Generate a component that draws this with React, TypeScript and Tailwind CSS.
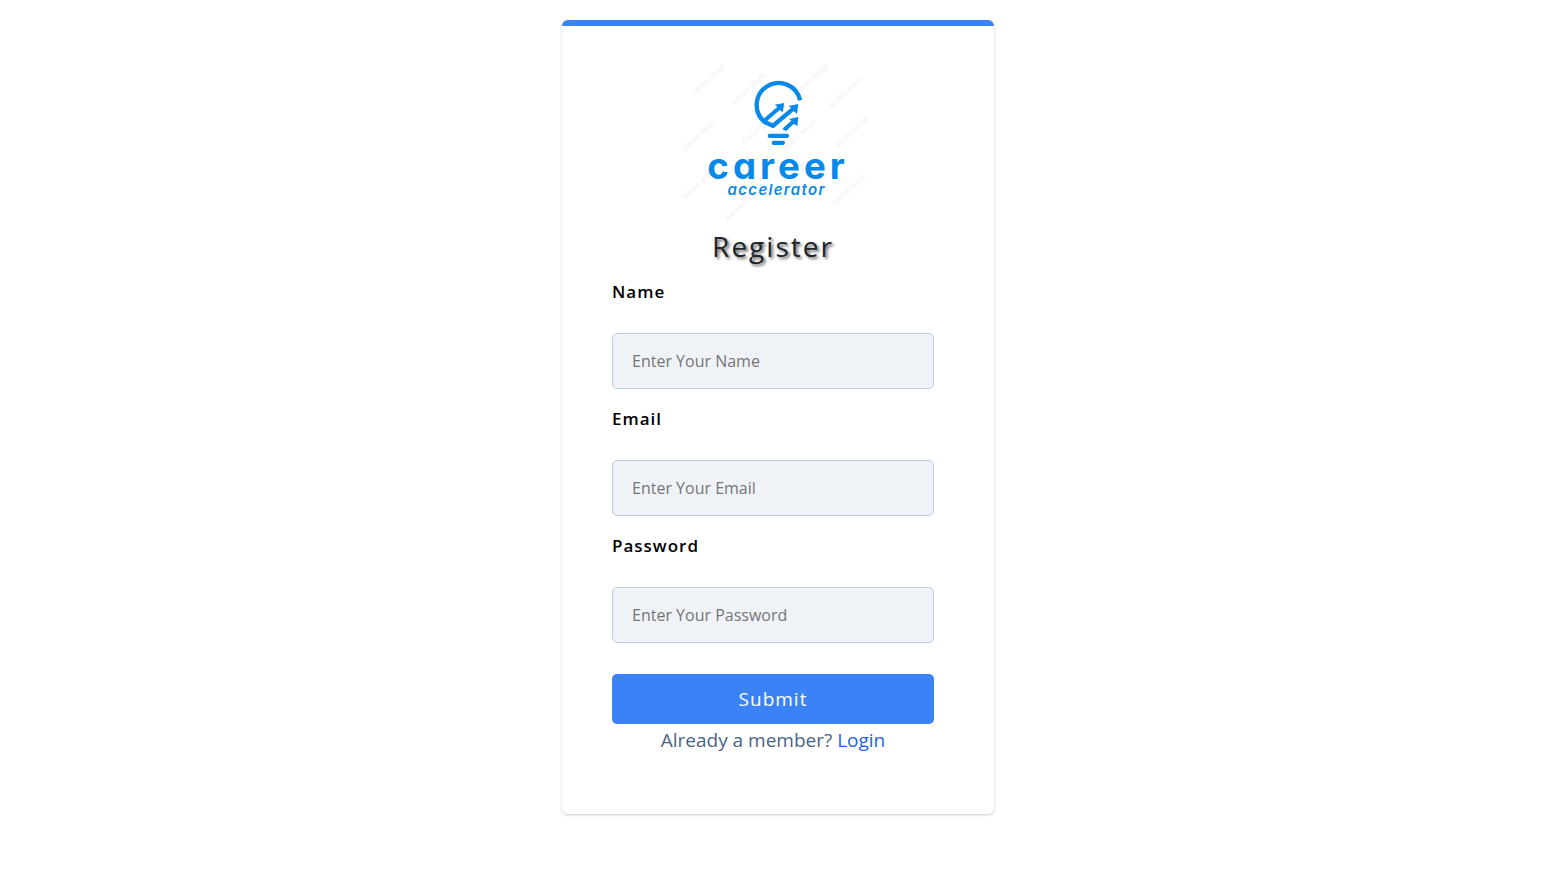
import { useState } from "react";

const fields = [
  { id: "name", label: "Name", type: "text", placeholder: "Enter Your Name" },
  { id: "email", label: "Email", type: "email", placeholder: "Enter Your Email" },
  { id: "password", label: "Password", type: "password", placeholder: "Enter Your Password" },
];

const watermarks = [
  [120, 64], [240, 92], [430, 62], [532, 102],
  [92, 230], [270, 212], [392, 232], [548, 222],
  [92, 375], [220, 440], [540, 395],
];

function Logo() {
  return (
    <svg viewBox="24 18 570 444" className="h-[148px] w-[190px] overflow-visible" role="img" aria-label="career accelerator">
      <g fill="#f7f7f7" stroke="#f7f7f7" strokeWidth="1" fontFamily="Liberation Sans, sans-serif" fontSize="21" fontWeight="700" textAnchor="middle" aria-hidden="true">
        {watermarks.map(([x, y]) => (
          <text key={`${x}-${y}`} x={x} y={y} transform={`rotate(-42 ${x} ${y})`}>
            Adobe Stock
          </text>
        ))}
      </g>
      <g fill="none" stroke="#0789ea" strokeWidth="13">
        <path d="M390.500 121 A66 66 0 1 0 284 186 L312 199" strokeLinejoin="round" />
        <path d="M283 182 L328 143" strokeWidth="12" />
        <path d="M306 200 L370 146" />
        <path d="M343 209 L372 183" strokeWidth="12" />
      </g>
      <g fill="#0789ea">
        <path d="M343 129 L314 134 L322 140 L332 152 L338 157 Z" />
        <path d="M385 132 L355 138 L364 144 L374 156 L381 161 Z" />
        <path d="M385 171 L357 177 L366 184 L373 193 L382 198 Z" />
        <path d="M337 209 L345 200 L355 209 Z" />
        <rect x="293" y="221" width="64" height="13" rx="6" />
        <rect x="305" y="242" width="40" height="13" rx="6" />
      </g>
      <g fill="#0789ea" textAnchor="middle" fontFamily="Inter, Lato, sans-serif" className="[font-feature-settings:'cv11']">
        <text x="324" y="356" fontWeight="700" fontSize="110" letterSpacing="12">career</text>
        <text x="320" y="406" fontWeight="600" fontStyle="italic" fontSize="45" letterSpacing="4">accelerator</text>
      </g>
    </svg>
  );
}

export default function App() {
  const [values, setValues] = useState<Record<string, string>>({});

  return (
    <main className="flex justify-center py-5 pl-[15px] font-['Open_Sans','Noto_Sans',sans-serif]">
      <div className="w-full max-w-[432px] rounded-md border-t-6 border-[#3b82f6] bg-white pt-10 pr-[60px] pb-[58px] pl-[50px] shadow-[0_1px_3px_rgba(0,0,0,0.2)]">
        <form onSubmit={(e) => e.preventDefault()}>
          <div className="flex justify-center">
            <Logo />
          </div>
          <h1 className="mt-[10px] text-center text-[28px] leading-11 tracking-[2px] text-[#212529] [text-shadow:2px_2px_3px_rgba(0,0,0,0.6)]">
            Register
          </h1>
          <div className="mt-3 flex flex-col gap-[18px]">
            {fields.map((f) => (
              <div key={f.id} className="flex flex-col gap-[29px]">
                <label htmlFor={f.id} className="text-[17px] leading-6 font-semibold tracking-[1px] text-black">
                  {f.label}
                </label>
                <input
                  id={f.id}
                  type={f.type}
                  placeholder={f.placeholder}
                  value={values[f.id] ?? ""}
                  onChange={(e) => setValues({ ...values, [f.id]: e.target.value })}
                  className="h-14 w-full rounded-[5px] border border-[#bccce0] bg-[#eff3f8] px-[19px] text-[16px] text-[#212529] placeholder:text-[#757575]"
                />
              </div>
            ))}
          </div>
          <button type="submit" className="mt-[31px] h-[50px] w-full rounded-[5px] bg-[#3b82f6] text-[19px] tracking-[1px] text-white">
            Submit
          </button>
          <p className="text-center text-[19px] leading-8 text-[#486581]">
            Already a member?{" "}
            <a href="#login" className="text-[#2563eb]">
              Login
            </a>
          </p>
        </form>
      </div>
    </main>
  );
}
